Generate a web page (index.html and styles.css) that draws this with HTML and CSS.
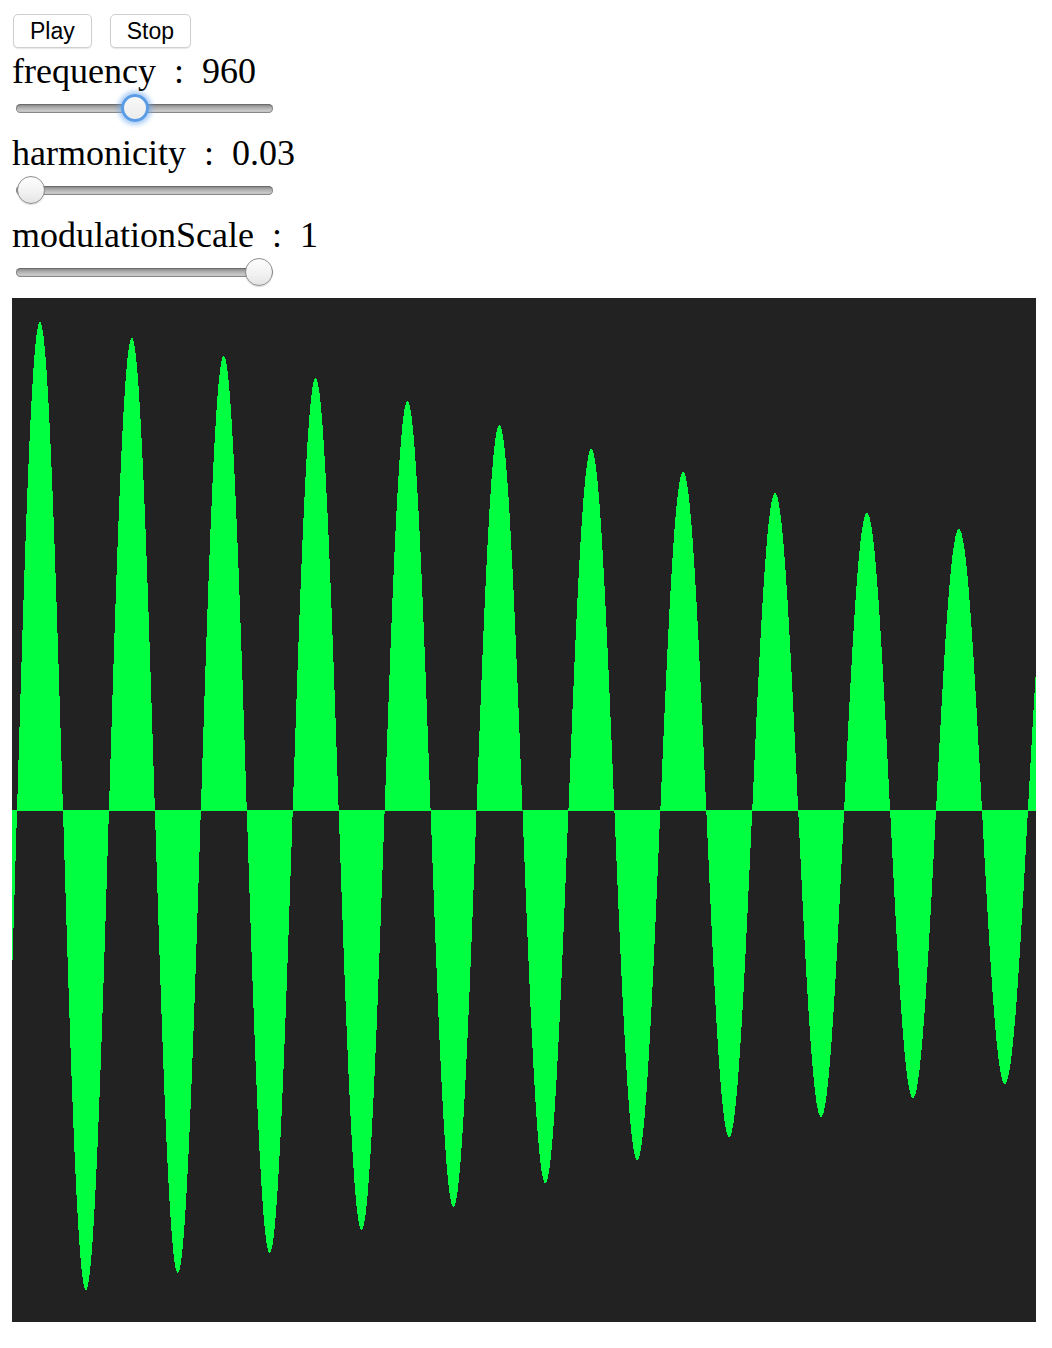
FILE: index.html
```html
<!DOCTYPE html>
<html>
<head>
<meta charset="utf-8">
<title>FM Synth</title>
<link rel="stylesheet" href="styles.css">
</head>
<body>
<div class="page">
  <div class="buttons">
    <button class="btn">Play</button>
    <button class="btn">Stop</button>
  </div>
  <div class="param">
    <div class="label">frequency : 960</div>
    <input type="range" class="slider focused" min="20" max="2070" value="960">
  </div>
  <div class="param">
    <div class="label">harmonicity : 0.03</div>
    <input type="range" class="slider" min="0" max="5" step="0.01" value="0.03">
  </div>
  <div class="param">
    <div class="label">modulationScale : 1</div>
    <input type="range" class="slider" min="0" max="1" step="0.01" value="1">
  </div>
  <canvas id="scope" class="scope" width="1024" height="1024"></canvas>
</div>
<script src="script.js"></script>
</body>
</html>
```

FILE: styles.css
```css
html, body {
  margin: 0;
  padding: 0;
  background: #fff;
}

.page {
  padding: 14px 0 0 12px;
}

.buttons {
  display: flex;
  gap: 18px;
  padding-left: 1px;
  margin-bottom: 3px;
}

.btn {
  font-family: "Liberation Sans", Arial, sans-serif;
  font-size: 23px;
  line-height: 1;
  height: 34px;
  padding: 0 16px;
  margin: 0;
  color: #000;
  background: #fff;
  border: 1px solid #cfcfcf;
  border-radius: 5px;
  box-shadow: 0 1px 1px rgba(0, 0, 0, 0.1);
}

.param {
  display: flex;
  flex-direction: column;
  align-items: flex-start;
  margin-bottom: 10px;
}

.label {
  font-family: "Liberation Serif", "Times New Roman", serif;
  font-size: 36px;
  line-height: 40px;
  letter-spacing: 0;
  word-spacing: 9px;
  color: #000;
  margin-bottom: 2px;
  white-space: pre;
}

.slider {
  -webkit-appearance: none;
  appearance: none;
  width: 257px;
  height: 30px;
  margin: 0 0 0 4px;
  padding: 0;
  background: transparent;
  outline: none;
}

.slider::-webkit-slider-runnable-track {
  height: 9px;
  border-radius: 5px;
  background: linear-gradient(to bottom, #7c7c7c 0%, #a9a9a9 35%, #c9c9c9 75%, #bdbdbd 100%);
  box-shadow: inset 0 0 0 1px rgba(90, 90, 90, 0.55);
}

.slider::-webkit-slider-thumb {
  -webkit-appearance: none;
  appearance: none;
  width: 28px;
  height: 28px;
  margin-top: -10px;
  border-radius: 50%;
  box-sizing: border-box;
  border: 1px solid #8e8e8e;
  background: linear-gradient(to bottom, #fdfdfd 0%, #f1f1f1 60%, #e4e4e4 100%);
  box-shadow: 0 1px 1px rgba(0, 0, 0, 0.15);
}

.slider.focused::-webkit-slider-thumb {
  border: 3px solid #5a9de6;
  background: linear-gradient(to bottom, #f8f8f8 0%, #ececec 100%);
  box-shadow: 0 0 4px 3px rgba(110, 170, 240, 0.55);
}

.scope {
  display: block;
  width: 1024px;
  height: 1024px;
  margin-top: 11px;
  background: #222;
}
```

FILE: script.js
```js
(function () {
  var canvas = document.getElementById('scope');
  var ctx = canvas.getContext('2d');
  var W = canvas.width, H = canvas.height, mid = 512;

  ctx.fillStyle = '#222222';
  ctx.fillRect(0, 0, W, H);

  var pts = [
    [28, 488], [74, 480], [120, 472], [166, 463], [212, 454], [258, 443],
    [304, 432], [350, 420], [396, 409], [442, 397], [488, 385], [534, 373],
    [580, 361], [626, 350], [672, 338], [718, 327], [763, 317], [809, 307],
    [855, 297], [901, 288], [947, 281], [993, 274]
  ];

  function amp(x) {
    var i;
    if (x <= pts[0][0]) {
      i = 0;
    } else if (x >= pts[pts.length - 1][0]) {
      i = pts.length - 2;
    } else {
      for (i = 0; i < pts.length - 1; i++) {
        if (x >= pts[i][0] && x <= pts[i + 1][0]) break;
      }
    }
    var a = pts[i], b = pts[i + 1];
    var t = (x - a[0]) / (b[0] - a[0]);
    return a[1] + (b[1] - a[1]) * t;
  }

  var P = 91.9;
  ctx.fillStyle = '#00ff40';
  for (var x = 0; x < W; x++) {
    var cx = x + 0.5;
    var v = amp(cx) * Math.cos(2 * Math.PI * (cx - 28) / P);
    v = Math.round(v);
    if (v >= 0) {
      ctx.fillRect(x, mid - v, 1, v + 1);
    } else {
      ctx.fillRect(x, mid, 1, -v);
    }
  }
})();
```
